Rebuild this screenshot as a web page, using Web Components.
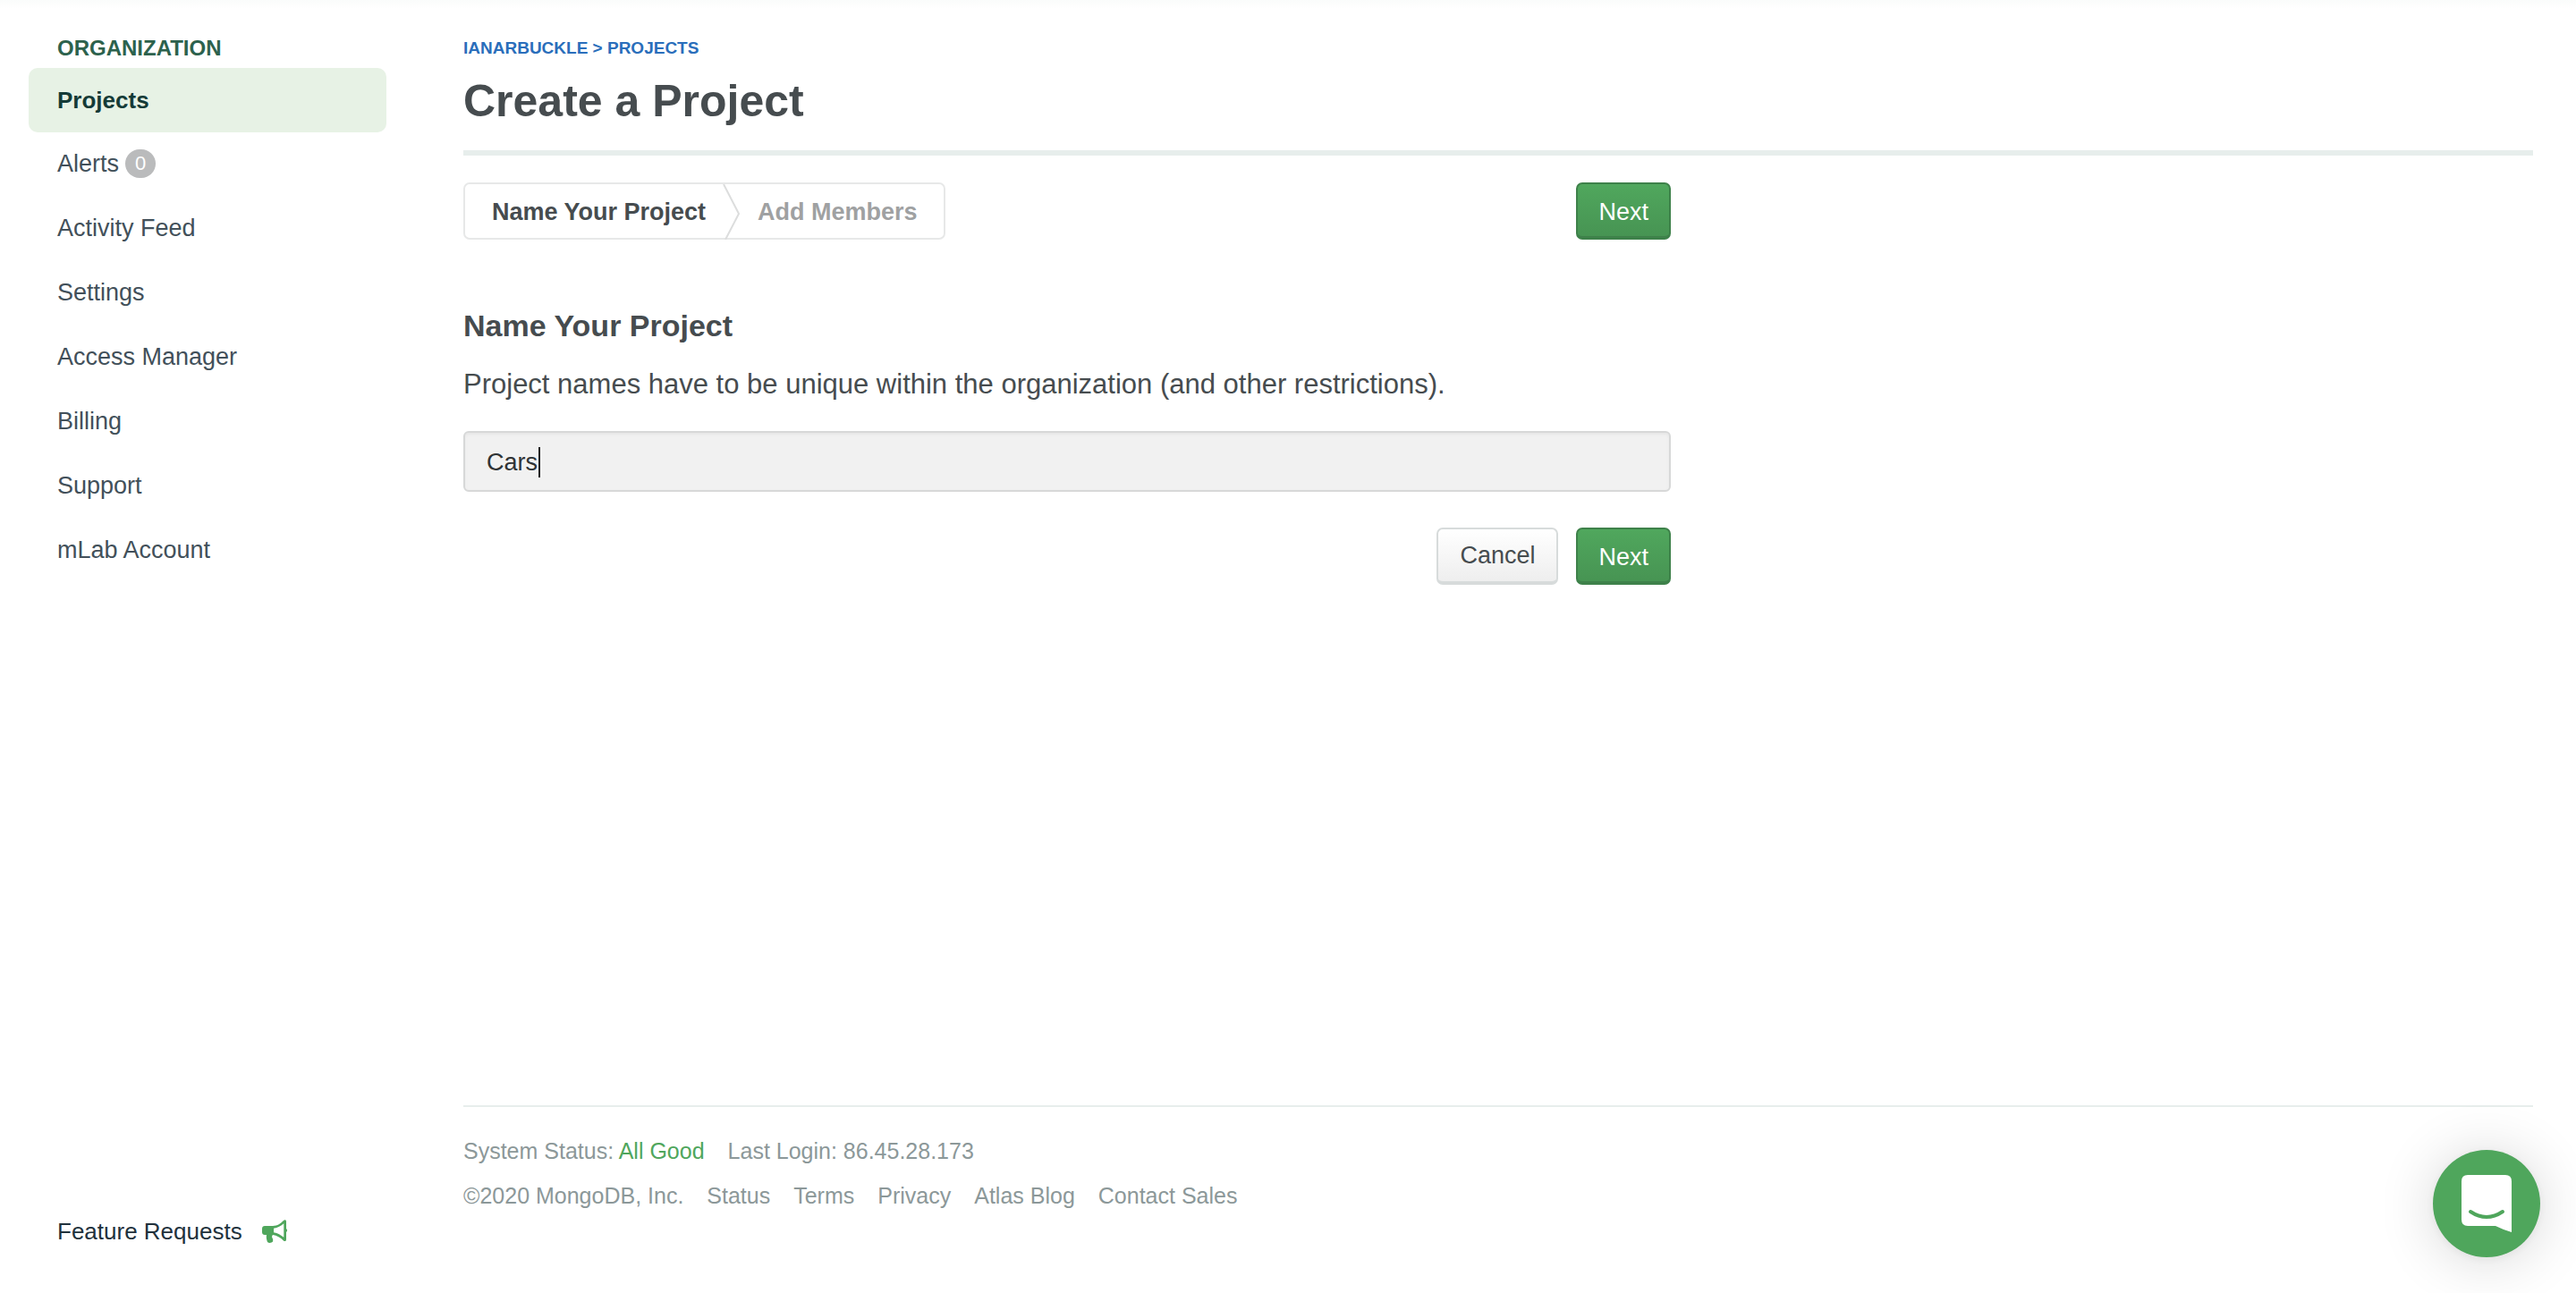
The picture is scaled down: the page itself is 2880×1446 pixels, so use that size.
<!DOCTYPE html>
<html lang="en">
<head>
<meta charset="utf-8">
<title>Create a Project</title>
<style>
  body {
    margin: 0;
    background: #fff;
    color: #464c4f;
    font-family: "Liberation Sans", Arial, sans-serif;
    font-size: 27px;
  }
</style>
</head>
<body>
<atlas-app>
  <side-nav slot="nav" heading="ORGANIZATION">
    <nav-item active>Projects</nav-item>
    <nav-item count="0">Alerts</nav-item>
    <nav-item>Activity Feed</nav-item>
    <nav-item>Settings</nav-item>
    <nav-item>Access Manager</nav-item>
    <nav-item>Billing</nav-item>
    <nav-item>Support</nav-item>
    <nav-item>mLab Account</nav-item>
  </side-nav>
  <page-header slot="header">
    <span slot="crumb">IANARBUCKLE &gt; PROJECTS</span>
    Create a Project
  </page-header>
  <project-form></project-form>
  <page-footer slot="footer"></page-footer>
  <chat-launcher slot="chat"></chat-launcher>
</atlas-app>

<script>
  function define(name, html, setup) {
    const template = document.createElement('template');
    template.innerHTML = html;
    customElements.define(name, class extends HTMLElement {
      constructor() {
        super();
        this.attachShadow({ mode: 'open' }).append(template.content.cloneNode(true));
      }
      connectedCallback() {
        if (setup) setup(this, this.shadowRoot);
      }
    });
  }

  define('atlas-app', `
    <style>
      :host { display: flex; min-height: 100vh; box-sizing: border-box;
        background: linear-gradient(#fafcfb, #fff 10px); }
      .side { flex: 0 0 518px; display: flex; }
      main { flex: 1; min-width: 0; display: flex; flex-direction: column; padding: 40px 48px 84px 0; }
      .body { flex: 1; padding-top: 30px; }
    </style>
    <div class="side"><slot name="nav"></slot></div>
    <main>
      <slot name="header"></slot>
      <div class="body"><slot></slot></div>
      <slot name="footer"></slot>
    </main>
    <slot name="chat"></slot>`);

  define('side-nav', `
    <style>
      :host { flex: 1; display: flex; flex-direction: column; box-sizing: border-box; padding: 38px 86px 50px 32px; }
      h2 { margin: 0 0 6px; padding-left: 32px; font-size: 24px; line-height: 32px; color: #2d624d; }
      nav { flex: 1; display: flex; flex-direction: column; }
      a { display: flex; align-items: center; gap: 22px; padding-left: 32px; font-size: 26px; line-height: 38px;
        color: #21313c; text-decoration: none; }
      svg { width: 28px; height: 26px; }
    </style>
    <h2></h2>
    <nav><slot></slot></nav>
    <a href="#">Feature Requests
      <svg viewBox="0 0 28 26" aria-hidden="true">
        <path fill="#4fa65c" fill-rule="evenodd" d="M3 7H12C17 7 21 4 24 1C25 0 27 0 27 2V10C28.400 11 28.400 13 27 14V22C27 24.500 25 24.500 24 23.500C20.500 20 16.500 17.600 12 17C10.500 18.500 11 20 12 21.500C12.500 23 12 23.500 12 24.500C11 26 7.500 26.500 6 25C5 22 4.500 20 5 17H3C1.200 17 0 16 0 14V10C0 8 1.200 7 3 7ZM13 9.800V14.200C17.500 15 21 17 24.300 19.800V4.200C21 7 17.500 9 13 9.800Z"/>
      </svg>
    </a>`,
    (host, root) => { root.querySelector('h2').textContent = host.getAttribute('heading'); });

  define('nav-item', `
    <style>
      :host { display: block; }
      a { display: flex; align-items: center; gap: 7px; height: 72px; box-sizing: border-box; padding: 0 32px 2px;
        border-radius: 10px; color: #42505a; text-decoration: none; }
      :host([active]) a { padding-bottom: 0; background: #e7f2e5; color: #153b37; font-size: 26px; font-weight: bold; }
      .count { min-width: 34px; height: 32px; border-radius: 16px; background: #babbbc; color: #fff;
        font-size: 22px; line-height: 32px; text-align: center; }
      .count:empty { display: none; }
    </style>
    <a href="#"><slot></slot><span class="count"></span></a>`,
    (host, root) => { root.querySelector('.count').textContent = host.getAttribute('count') || ''; });

  define('page-header', `
    <style>
      :host { display: block; padding-bottom: 24px; border-bottom: 6px solid #e7eeec; }
      a { display: block; font-size: 19px; line-height: 28px; font-weight: bold; color: #2a6ebb; text-decoration: none; }
      h1 { margin: 14px 0 0; font-size: 50px; line-height: 62px; color: #464c4f; }
    </style>
    <a href="#"><slot name="crumb"></slot></a>
    <h1><slot></slot></h1>`);

  define('step-bar', `
    <style>
      :host { display: block; }
      ol { display: flex; height: 60px; margin: 0; padding: 0 29px 0 30px; list-style: none; line-height: 62px;
        border: 2px solid #e7e8e8; border-radius: 7px; font-weight: bold; color: #9fa1a2; }
      .current { display: flex; color: #464c4f; }
      svg { display: block; width: 20px; height: 62px; margin: 0 19px; }
    </style>
    <ol>
      <li class="current" aria-current="step">Name Your Project
        <svg viewBox="0 0 20 62" aria-hidden="true"><path d="M1 0L18 33L3 62" fill="none" stroke="#dcdddd" stroke-width="2"/></svg>
      </li>
      <li>Add Members</li>
    </ol>`);

  define('ui-button', `
    <style>
      :host { display: block; }
      button { display: block; height: 64px; box-sizing: border-box; padding: 0 24px; border: 2px solid #d7dbdb;
        border-bottom-width: 4px; border-radius: 7px; background: linear-gradient(#fff, #eee);
        color: #464c4f; font: inherit; line-height: 58px; }
      :host([primary]) button { border-color: #3e814a; background: linear-gradient(#50a75d, #479453); color: #fff;
        padding: 4px 23px 0; line-height: 54px; }
    </style>
    <button type="button"><slot></slot></button>`);

  define('project-form', `
    <style>
      :host { display: block; max-width: 1350px; }
      .top { display: flex; justify-content: space-between; }
      h2 { margin: 76px 0 24px; font-size: 34px; line-height: 40px; }
      label { display: block; font-size: 31px; line-height: 44px; }
      .field { position: relative; margin: 30px 0 40px; }
      input { display: block; width: 100%; height: 68px; box-sizing: border-box; padding: 2px 24px 0;
        border: 2px solid #d7d8d8; border-radius: 6px; background: #f1f1f1; box-shadow: inset 0 2px 3px #e6e6e6;
        color: #2f3335; font: inherit; outline: 0; }
      .caret { position: absolute; left: 84px; top: 18px; width: 2px; height: 34px; background: #222; }
      .actions { display: flex; justify-content: flex-end; gap: 20px; }
    </style>
    <div class="top"><step-bar></step-bar><ui-button primary>Next</ui-button></div>
    <h2>Name Your Project</h2>
    <label for="name">Project names have to be unique within the organization (and other restrictions).</label>
    <div class="field"><input id="name" type="text" value="Cars"><span class="caret"></span></div>
    <div class="actions"><ui-button>Cancel</ui-button><ui-button primary>Next</ui-button></div>`);

  define('page-footer', `
    <style>
      :host { display: block; padding-top: 24px; border-top: 2px solid #e7eeec; font-size: 25px; line-height: 50px; color: #8c9899; }
      div { display: flex; gap: 26px; }
      a { color: inherit; text-decoration: none; }
      .ok { color: #4fa65c; }
    </style>
    <div><span>System Status: <a class="ok" href="#">All Good</a></span><span>Last Login: 86.45.28.173</span></div>
    <div><span>©2020 MongoDB, Inc.</span><a href="#">Status</a><a href="#">Terms</a><a href="#">Privacy</a><a href="#">Atlas Blog</a><a href="#">Contact Sales</a></div>`);

  define('chat-launcher', `
    <style>
      :host { position: fixed; right: 40px; bottom: 40px; }
      button { display: grid; place-items: center; width: 120px; height: 120px; padding: 0; border: 0; border-radius: 50%;
        background: #4fa65c; box-shadow: 0 2px 12px rgba(0,0,0,.06), 0 4px 64px rgba(0,0,0,.16); }
      svg { width: 56px; height: 64px; }
    </style>
    <button type="button" aria-label="Open chat">
      <svg viewBox="0 0 56 64" aria-hidden="true">
        <path fill="#fff" d="M7 0H49Q56 0 56 7V64Q46 61 38 57H7Q0 57 0 50V7Q0 0 7 0Z"/>
        <path d="M10 41Q28 53 46 41" fill="none" stroke="#4fa65c" stroke-width="4" stroke-linecap="round"/>
      </svg>
    </button>`);
</script>
</body>
</html>
